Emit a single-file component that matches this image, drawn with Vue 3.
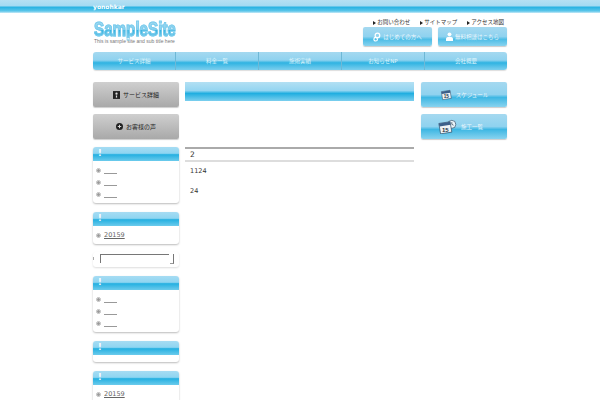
<script setup>
const nav = ['サービス詳細', '料金一覧', '施術実績', 'お知らせNP', '会社概要']
const links = ['お問い合わせ', 'サイトマップ', 'アクセス地図']
const boxes = [
  { items: ['____', '____', '____'] },
  { items: ['20159'], link: true },
  { input: true },
  { items: ['____', '____', '____'] },
  { items: [] },
  { items: ['20159'], link: true },
]
</script>

<template>
  <div class="page">
    <div class="topbar"><div class="wrap"><span class="tagline">yonohkar</span></div></div>
    <div class="wrap">
      <header class="header">
        <div class="brand">
          <div class="logo">SampleSite</div>
          <div class="sub">This is sample site and sub title here</div>
        </div>
        <div class="head-right">
          <ul class="links">
            <li v-for="l in links" :key="l"><i class="tri"></i>{{ l }}</li>
          </ul>
          <div class="head-btns">
            <a class="head-btn">
              <svg width="8" height="10" viewBox="0 0 9 10"><circle cx="5" cy="3.2" r="2.6" fill="none" stroke="#fff" stroke-width="1.4"/><circle cx="3" cy="7.5" r="2" fill="none" stroke="#fff" stroke-width="1.3"/></svg>
              はじめての方へ
            </a>
            <a class="head-btn">
              <svg width="7" height="9" viewBox="0 0 8 10"><circle cx="4" cy="2.5" r="2.2" fill="#fff"/><path d="M0 10V7.5C0 6 1.5 5.2 4 5.2S8 6 8 7.5V10Z" fill="#fff"/></svg>
              無料相談はこちら
            </a>
          </div>
        </div>
      </header>
      <nav class="nav">
        <a v-for="n in nav" :key="n">{{ n }}</a>
      </nav>
      <div class="columns">
        <aside class="left">
          <a class="gray-btn">
            <svg width="7" height="8" viewBox="0 0 8 9"><path d="M0 0H8V9H0Z" fill="#222"/><circle cx="4" cy="3" r="1.3" fill="#ddd"/><path d="M3.3 5H4.7V7.5H3.3Z" fill="#ddd"/></svg>
            サービス詳細
          </a>
          <a class="gray-btn last">
            <svg width="7" height="7" viewBox="0 0 8 8"><circle cx="4" cy="4" r="4" fill="#222"/><path d="M2 4H6M4 2V6" stroke="#ddd" stroke-width="1.1"/></svg>
            お客様の声
          </a>
          <section v-for="(b, i) in boxes" :key="i" class="box" :class="{ 'box-input': b.input }">
            <template v-if="b.input">
              <span class="dash"></span>
              <div class="fake-input"></div>
              <span class="corner"></span>
            </template>
            <template v-else>
              <h3 class="box-title">!</h3>
              <ul class="box-list" :class="{ empty: !b.items.length }">
                <li v-for="(t, j) in b.items" :key="j"><i class="bullet"></i><span :class="{ under: b.link, blank: !b.link }">{{ b.link ? t : '' }}</span></li>
              </ul>
            </template>
          </section>
        </aside>
        <main class="main">
          <div class="main-bar"></div>
          <h2 class="main-head">2</h2>
          <p class="p1">1124</p>
          <p class="p2">24</p>
        </main>
        <aside class="right">
          <a class="blue-btn">
            <svg width="12" height="12" viewBox="0 0 18 16"><path d="M2 3L15 1L17 13L4 15Z" fill="#eef2f5" stroke="#2b4a66" stroke-width=".8"/><path d="M2 3L15 1L15.6 4.5L2.6 6.5Z" fill="#3b5f8a"/><text x="5.5" y="13" font-size="7" font-weight="700" fill="#234" font-family="Liberation Sans, sans-serif">15</text></svg>
            スケジュール
          </a>
          <a class="blue-btn shifted">
            <svg width="19" height="15" viewBox="0 0 22 17"><circle cx="16" cy="6" r="4.6" fill="#eef6fb" stroke="#2b4a66" stroke-width=".8"/><path d="M16 3.5V6L18 7" stroke="#234" fill="none" stroke-width=".8"/><path d="M1 5L14 3L16 15L3 17Z" fill="#eef2f5" stroke="#2b4a66" stroke-width=".8"/><path d="M1 5L14 3L14.6 6.5L1.6 8.5Z" fill="#3b5f8a"/><text x="4.5" y="15" font-size="7" font-weight="700" fill="#234" font-family="Liberation Sans, sans-serif">15</text></svg>
            施工一覧
          </a>
        </aside>
      </div>
    </div>
  </div>
</template>

<style>
html, body { margin: 0; background: #fff; overflow: hidden; }
</style>

<style scoped>
.page { width: 600px; height: 400px; overflow: hidden; font-family: "DejaVu Sans", "Noto Sans CJK JP", sans-serif; color: #333; }
.wrap { width: 414px; margin-left: 93px; }
.topbar { height: 13px; background: linear-gradient(#b5e0f3 0%, #a3daf2 45%, #27b2e2 55%, #5cc6ea 85%, #c8eaf7 100%); }
.tagline { display: block; font-size: 6px; font-weight: 700; line-height: 13px; color: #fff; }
.header { height: 39px; display: flex; justify-content: space-between; }
.brand { padding-top: 8px; }
.logo { font-family: "Liberation Sans", sans-serif; font-weight: 700; font-size: 20px; line-height: 17px; width: 107px; transform: scaleX(.76); transform-origin: 0 0; margin-left: 1px; white-space: nowrap; -webkit-text-stroke: 1px #79cbec; background: linear-gradient(#a9dcf3 0%, #86d0ee 50%, #38b2e0 55%, #7fd0ee 100%); -webkit-background-clip: text; background-clip: text; color: transparent; }
.sub { font-family: "Liberation Sans", sans-serif; font-size: 5px; line-height: 6px; margin-left: 1px; color: #777; white-space: nowrap; }
.head-right { display: flex; flex-direction: column; align-items: flex-end; }
.links { list-style: none; margin: 0; padding: 5px 3px 0 0; display: flex; gap: 10px; font-size: 5.5px; line-height: 8px; color: #333; height: 9px; }
.tri { display: inline-block; border-left: 3px solid #222; border-top: 2px solid transparent; border-bottom: 2px solid transparent; margin-right: 1px; vertical-align: -.5px; }
.head-btns { display: flex; gap: 6px; }
.head-btn { width: 69px; height: 19px; border-radius: 2px; display: flex; align-items: center; justify-content: center; gap: 2px; font-size: 5.5px; color: rgba(255,255,255,.85); background: linear-gradient(#a5d9f0 0%, #8fd2ef 50%, #4dbde6 65%, #89d3ef 100%); box-shadow: 0 1px 1px #ccc; }
.nav { height: 18px; display: flex; border-radius: 3px; overflow: hidden; background: linear-gradient(#a5d9f0 0%, #8fd2ef 45%, #2fb3e2 60%, #7dcfee 100%); box-shadow: 0 1px 1px #ddd; }
.nav a { flex: 1; display: flex; align-items: center; justify-content: center; font-size: 5.5px; color: #dff4fb; border-right: 1px solid #6eb8d6; }
.nav a:last-child { border-right: 0; }
.columns { display: flex; margin-top: 12px; gap: 6px; align-items: flex-start; }
.left { width: 86px; flex: none; display: flex; flex-direction: column; }
.gray-btn { height: 25px; margin-bottom: 7px; border-radius: 2px; display: flex; align-items: center; justify-content: center; gap: 3px; font-size: 6px; color: #222; background: linear-gradient(#cfcfcf, #a9a9a9); box-shadow: 0 1px 1px #ccc; }
.gray-btn.last { margin-bottom: 8px; }
.box { margin-bottom: 9px; border-radius: 3px; background: #fff; box-shadow: 0 1px 2px #bbb; }
.box-title { margin: 0; height: 14px; padding-left: 5px; font-size: 8px; line-height: 14px; font-weight: 700; color: #fff; border-radius: 3px 3px 0 0; background: linear-gradient(#a6dcf3 0%, #8fd5f1 45%, #25b0e1 55%, #6ccbec 100%); }
.box-list { list-style: none; margin: 0; padding: 3px 4px 3px 3px; font-size: 6.5px; color: #666; }
.box-list.empty { height: 7px; padding: 0; }
.box-list li { height: 12px; line-height: 12px; display: flex; align-items: center; gap: 3px; }
.bullet { width: 3px; height: 3px; border: 1px solid #bbb; border-radius: 50%; background: #999; background-clip: content-box; }
.under { text-decoration: underline; }
.blank { width: 13px; height: 5px; border-bottom: 1px solid #999; margin-top: 2px; }
.box-input { height: 13px; margin-top: -1px; display: flex; align-items: flex-start; padding: 2px 0 0; box-shadow: 0 1px 2px #ddd; }
.dash { width: 1px; height: 3px; background: #aaa; margin: 3px 6px 0 0; }
.fake-input { width: 68px; height: 8px; border-top: 1px solid #777; border-left: 1px solid #777; }
.corner { width: 3px; height: 9px; margin-left: 1px; border-right: 1px solid #777; border-bottom: 1px solid #999; }
.main { width: 229px; flex: none; font-size: 6.5px; }
.main-bar { height: 19px; background: linear-gradient(#b3e0f3 0%, #94d5f1 45%, #20aee0 60%, #7ccfee 100%); }
.main-head { margin: 46px 0 0; height: 11px; padding-left: 5px; border-top: 2px solid #aaa; border-bottom: 2px solid #ddd; font-size: 7.5px; font-weight: 400; line-height: 11px; color: #333; }
.p1 { margin: 5px 0 0 5px; line-height: 9px; color: #333; }
.p2 { margin: 11px 0 0 5px; line-height: 9px; color: #333; }
.right { width: 86px; flex: none; margin-left: 1px; display: flex; flex-direction: column; gap: 7px; }
.blue-btn { height: 25px; border-radius: 2px; display: flex; align-items: center; justify-content: center; gap: 4px; font-size: 5.5px; color: rgba(255,255,255,.85); background: linear-gradient(#a5d9f0 0%, #8fd2ef 50%, #3eb7e3 62%, #89d3ef 100%); box-shadow: 0 1px 1px #ccc; }
.blue-btn.shifted { padding-right: 7px; box-sizing: border-box; }
</style>
